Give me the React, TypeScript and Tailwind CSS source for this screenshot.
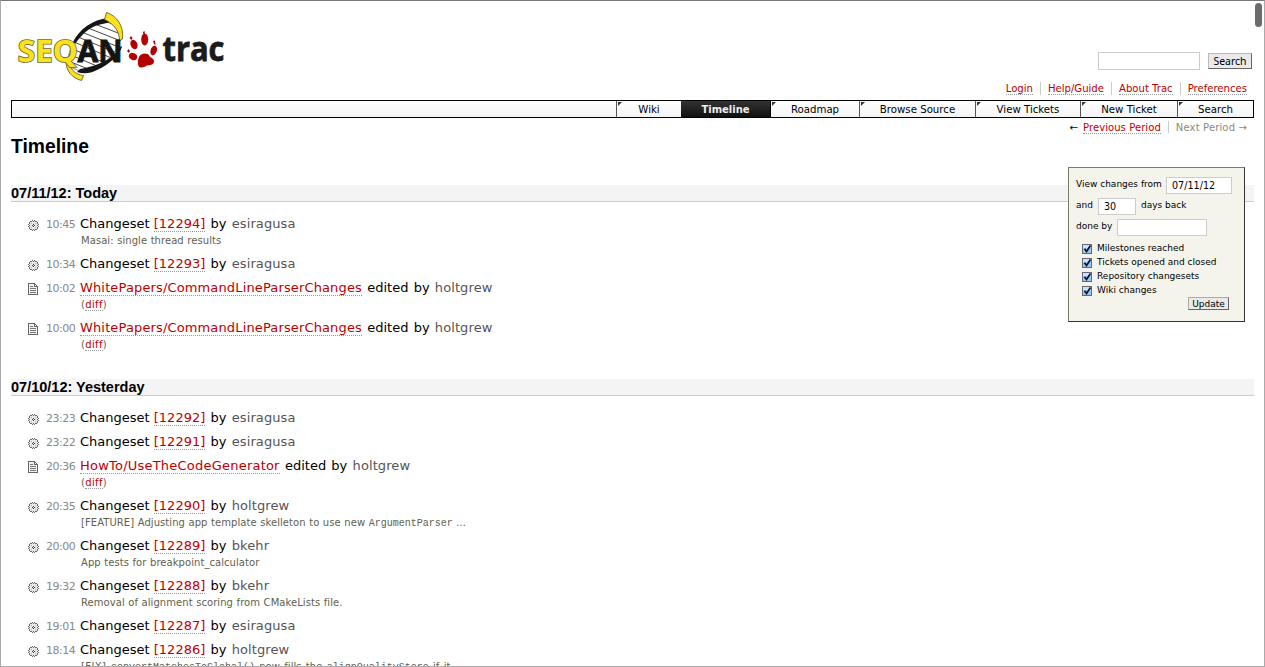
import React from "react";

const VERDANA = "font-['Verdana','DejaVu_Sans',sans-serif]";

function Logo() {
  return (
    <svg width="226" height="76" viewBox="12 8 226 76" className="block overflow-visible" role="img" aria-label="SeqAn trac">
      <defs>
        <clipPath id="helix">
          <path d="M106 22C92 24 80 33 74 43C69 51 66 60 70 67L80 71C96 70 112 60 118 46C121 39 121 31 116 25Z" />
        </clipPath>
      </defs>
      <path d="M106 22C92 24 80 33 74 43C69 51 66 60 70 67L80 71C96 70 112 60 118 46C121 39 121 31 116 25Z" fill="#fff" stroke="#555" strokeWidth=".7" />
      <g clipPath="url(#helix)" stroke="#333" strokeWidth=".9">
        <path d="M92 23L126 36M88 28L126 43M84 33L126 50M78 37L124 56M74 42L116 60M68 47L110 65M66 53L104 69M66 60L98 73" />
      </g>
      <path d="M108 18C93 19.500 79 29 72.500 43L75.500 43.500C82 34 90 27 98 25L109 22.500Z" fill="#161616" />
      <path d="M121 46C114 57 103 65 80 69L77 72C84 74.500 90 73.500 98 69.500C108 65 118 57 122 47Z" fill="#161616" />
      <path d="M106.500 12.500C117 16 124 26 122.500 39L119.500 41C119.500 31 114 24 104.500 19.500Z" fill="#fbe21c" stroke="#55501a" strokeWidth=".8" />
      <path d="M69 61C69.500 69 75 74.500 83.500 75.500L81.500 80.500C72 78 66 71 66 61Z" fill="#fbe21c" stroke="#55501a" strokeWidth=".8" />
      <text x="17.800" y="61.500" textLength="60" lengthAdjust="spacingAndGlyphs" fill="#fbe21c" stroke="#6e682c" strokeWidth="1.600" paintOrder="stroke" className="font-['Noto_Sans',sans-serif] text-[30.500px] font-bold">SEQ</text>
      <text x="77.500" y="61.500" textLength="45" lengthAdjust="spacingAndGlyphs" fill="#141414" stroke="#141414" strokeWidth=".9" className="font-['Noto_Sans',sans-serif] text-[30.500px] font-bold">AN</text>
      <g fill="#b50000">
        <ellipse cx="144.700" cy="39.500" rx="3.500" ry="6" />
        <ellipse cx="134" cy="44.500" rx="3.400" ry="4.900" transform="rotate(-22 134 44.500)" />
        <ellipse cx="153.700" cy="50.500" rx="3.100" ry="5" transform="rotate(18 153.700 50.500)" />
        <ellipse cx="133" cy="56.500" rx="4.300" ry="3.400" transform="rotate(30 133 56.500)" />
        <path d="M139.500 56C141.500 53 147.500 52.500 149.500 56C150.500 58 154 58 154 61.500C154 65 149.500 65 147 65.500C144 67.500 140 68.500 138.500 66C137 63 138 59 139.500 56Z" />
        <path d="M143 32L144.500 31L145 35L143.500 35ZM129.500 38L131 36L132.500 38L131.500 40ZM153 41L155 40.500L155.500 45L154 44ZM127 51L128.500 49L130 51L129 53Z" />
      </g>
      <text x="162.500" y="60.800" textLength="62" lengthAdjust="spacingAndGlyphs" fill="#1b1b1b" stroke="#1b1b1b" strokeWidth=".8" className="font-['Open_Sans',sans-serif] text-[34px] font-bold">trac</text>
    </svg>
  );
}

function GearIcon() {
  return (
    <svg width="11" height="11" viewBox="0 0 11 11" shapeRendering="crispEdges" className="block">
      <path d="M4 1h3v1h2v2h1v3h-1v2h-2v1h-3v-1h-2v-2h-1v-3h1v-2h2z" fill="#e8e8e8" />
      <path d="M4 0h1v1h-1zM6 0h1v1h-1zM5 1h1v1h-1zM2 1h2v1h-2zM7 1h2v1h-2zM1 2h1v2h-1zM9 2h1v2h-1zM0 4h1v1h-1zM10 4h1v1h-1zM1 5h1v1h-1zM9 5h1v1h-1zM0 6h1v1h-1zM10 6h1v1h-1zM1 7h1v2h-1zM9 7h1v2h-1zM2 9h2v1h-2zM7 9h2v1h-2zM5 9h1v1h-1zM4 10h1v1h-1zM6 10h1v1h-1z" fill="#666" />
      <path d="M5 4h1v1h-1zM4 5h1v1h-1zM6 5h1v1h-1zM5 6h1v1h-1z" fill="#444" />
      <path d="M3 3h1v1h-1zM7 3h1v1h-1zM3 7h1v1h-1zM7 7h1v1h-1z" fill="#bbb" />
    </svg>
  );
}

function PageIcon() {
  return (
    <svg width="10" height="12" viewBox="0 0 10 12" shapeRendering="crispEdges" className="-mt-px block">
      <path d="M0 0h7v1h1v1h1v1h1v9h-10z" fill="#666" />
      <path d="M1 1h5v3h3v7h-8z" fill="#f2f2f2" />
      <path d="M7 2h1v1h-1z" fill="#fff" />
      <path d="M2 3h3v1h-3zM2 5h6v1h-6zM2 7h6v1h-6zM2 9h6v1h-6z" fill="#777" />
    </svg>
  );
}

type Entry = { kind: "set" | "wiki"; time: string; link: string; author: string; note?: React.ReactNode };

const Mono = ({ children }: { children: React.ReactNode }) => (
  <span className="font-['Liberation_Mono',monospace] text-[10px] tracking-normal">{children}</span>
);

const diff = (
  <span className="tracking-[0.35px]">
    (<a className="border-b border-dotted border-[#999] text-[#b00]">diff</a>)
  </span>
);

const today: Entry[] = [
  { kind: "set", time: "10:45", link: "[12294]", author: "esiragusa", note: "Masai: single thread results" },
  { kind: "set", time: "10:34", link: "[12293]", author: "esiragusa" },
  { kind: "wiki", time: "10:02", link: "WhitePapers/CommandLineParserChanges", author: "holtgrew", note: diff },
  { kind: "wiki", time: "10:00", link: "WhitePapers/CommandLineParserChanges", author: "holtgrew", note: diff },
];

const yesterday: Entry[] = [
  { kind: "set", time: "23:23", link: "[12292]", author: "esiragusa" },
  { kind: "set", time: "23:22", link: "[12291]", author: "esiragusa" },
  { kind: "wiki", time: "20:36", link: "HowTo/UseTheCodeGenerator", author: "holtgrew", note: diff },
  { kind: "set", time: "20:35", link: "[12290]", author: "holtgrew", note: <>[FEATURE] Adjusting app template skelleton to use new <Mono>ArgumentParser</Mono> ...</> },
  { kind: "set", time: "20:00", link: "[12289]", author: "bkehr", note: "App tests for breakpoint_calculator" },
  { kind: "set", time: "19:32", link: "[12288]", author: "bkehr", note: "Removal of alignment scoring from CMakeLists file." },
  { kind: "set", time: "19:01", link: "[12287]", author: "esiragusa" },
  {
    kind: "set",
    time: "18:14",
    link: "[12286]",
    author: "holtgrew",
    note: (
      <span className="[word-spacing:1px]">
        <span className="tracking-[0.4px]">[FIX] </span>
        <Mono>convertMatchesToGlobal()</Mono> now fills the <Mono>alignQualityStore</Mono> if it
      </span>
    ),
  },
];

function Day({ title, entries, className }: { title: string; entries: Entry[]; className: string }) {
  return (
    <section className={`shrink-0 ${className}`}>
      <h2 className="h-[17px] border-b border-[#ccc] bg-[#f4f4f4] font-['Liberation_Sans',sans-serif] text-[14.5px] leading-4 font-bold">{title}</h2>
      <div className="pt-[10px]">
        {entries.map((e) => (
          <div key={e.time}>
            <div className="flex h-6 pl-[17px] leading-6 whitespace-pre">
              <span className="w-[18px] pt-[8px]">{e.kind === "set" ? <GearIcon /> : <PageIcon />}</span>
              <span className="w-[34px] pt-px text-[11px] tracking-[-0.5px] text-[#888]">{e.time}</span>
              <span className="text-[13px] [word-spacing:1.1px]">
                {e.kind === "set" && <span className="[word-spacing:0px]">{"Changeset "}</span>}
                <a className={`border-b border-dotted border-[#999] text-[#b00] ${e.kind === "wiki" ? (e.link.startsWith("How") ? "tracking-[0.22px]" : "tracking-[0.14px]") : ""}`}>{e.link}</a>
                {e.kind === "set" ? " by " : " edited by "}
                <span className="tracking-[0.1px] text-[#555]">{e.author}</span>
              </span>
            </div>
            {e.note && (
              <div className="h-4 pl-[70px] text-[10px] leading-[10px] tracking-[0.06px] whitespace-nowrap text-[#5f5f4c] [word-spacing:0.3px]">{e.note}</div>
            )}
          </div>
        ))}
      </div>
    </section>
  );
}

const tabs = [
  { label: "Wiki", w: "w-[65px]" },
  { label: "Timeline", w: "w-[90px]" },
  { label: "Roadmap", w: "w-[88px]" },
  { label: "Browse Source", w: "w-[116px]" },
  { label: "View Tickets", w: "w-[105px]" },
  { label: "New Ticket", w: "w-[97px]" },
  { label: "Search", w: "w-[76px]" },
];

function Nav() {
  return (
    <nav className="flex h-[18px] shrink-0 justify-end border border-black bg-linear-to-b from-white to-[#f4f4f4] text-[10.2px] leading-[17px]">
      {tabs.map((t) =>
        t.label === "Timeline" ? (
          <span key={t.label} className={`${t.w} border-r border-black bg-linear-to-b from-[#333] to-[#111] text-center text-[10px] font-bold text-[#eee]`}>{t.label}</span>
        ) : (
          <span key={t.label} className={`${t.w} relative text-center ${t.label === "Roadmap" ? "" : "border-l border-[#555]"}`}>
            <svg width="4" height="4" className="absolute top-px left-px"><path d="M0 0H4L0 4Z" fill="#333" /></svg>
            {t.label}
          </span>
        ),
      )}
    </nav>
  );
}

function Check({ children }: { children: string }) {
  return (
    <label className="flex h-[14px] items-center gap-[5px] leading-[14px]">
      <svg width="10" height="10" viewBox="0 0 10 10" className="mt-px block">
        <rect x=".5" y=".5" width="9" height="9" fill="#9cc8f2" stroke="#667" />
        <path d="M1 1h8v3H1z" fill="#cfe3f8" />
        <path d="M2.500 4.800L4.500 7.500L8.500 1.500" fill="none" stroke="#07142e" strokeWidth="1.700" />
      </svg>
      {children}
    </label>
  );
}

function Prefs() {
  return (
    <form className="absolute top-[166px] right-[19px] flex h-[155px] w-[177px] flex-col border border-t-[#7c7c66] border-r-[#333] border-b-[#333] border-l-[#7c7c66] bg-[#f4f4ec] pt-[9px] pl-[7px] text-[9px] leading-4 whitespace-nowrap">
      <div className="flex h-[21px] gap-[5px]">
        <span className="-mt-px w-[85px]">View changes from</span>
        <span className="h-[17px] w-[66px] border border-[#ccc] bg-white pl-[5px] text-[9.6px] leading-[16px]">07/11/12</span>
      </div>
      <div className="flex h-[21px]">
        <span className="-mt-px w-[22px]">and</span>
        <span className="h-[17px] w-[38px] border border-[#ccc] bg-white pl-[5px] text-[9.6px] leading-[16px]">30</span>
        <span className="-mt-px ml-[5px]">days back</span>
      </div>
      <div className="flex h-[22px]">
        <span className="-mt-px w-[41px]">done by</span>
        <span className="h-[17px] w-[90px] border border-[#ccc] bg-white" />
      </div>
      <div className="pl-[6px]">
        <Check>Milestones reached</Check>
        <Check>Tickets opened and closed</Check>
        <Check>Repository changesets</Check>
        <Check>Wiki changes</Check>
      </div>
      <span className="mr-[15px] h-[13px] w-[41px] self-end border border-[#aaa] border-r-[#666] border-b-[#666] bg-[#eaeaea] text-center leading-[12px]">Update</span>
    </form>
  );
}

const metaLink = "border-b border-dotted border-[#999] text-[#b00]";

export default function App() {
  return (
    <div className={`${VERDANA} relative flex h-[667px] w-[1265px] flex-col overflow-hidden border border-t-[#777] border-r-[#aaa] border-b-[#aaa] border-l-[#aaa] bg-white pr-[10px] pl-[10px] text-black`}>
      <header className="flex h-[79px] shrink-0 justify-between pt-[7px]">
        <div className="pl-px"><Logo /></div>
        <div className="flex pt-[44px] pr-[2px]">
          <span className="h-[18px] w-[102px] border border-[#ccc]" />
          <span className="mt-px ml-2 h-[16px] w-[44px] border border-[#bbb] border-r-[#666] border-b-[#666] bg-[#eaeaea] text-center font-['Noto_Sans',sans-serif] text-[10.5px] leading-[14px]">Search</span>
        </div>
      </header>
      <div className="flex h-[20px] shrink-0 justify-end pt-[2px] pr-[7px] text-[10.1px]">
        {["Login", "Help/Guide", "About Trac", "Preferences"].map((m, i) => (
          <span key={m} className={`h-[13px] leading-[14px] ${i ? "ml-[7px] border-l border-[#ccc] pl-[7px]" : ""}`}>
            <a className={metaLink}>{m}</a>
          </span>
        ))}
      </div>
      <Nav />
      <div className="flex h-[19px] shrink-0 justify-end pt-[3px] pr-[7px] text-[10px] leading-[13px] tracking-[0.08px]">
        <span>←<a className={`ml-[5px] ${metaLink}`}>Previous Period</a></span>
        <span className="ml-[7px] h-3 border-l border-[#ccc] pl-[7px] tracking-[0.15px] text-[#8a8a78]">Next Period →</span>
      </div>
      <h1 className="h-[48px] shrink-0 font-['Liberation_Sans',sans-serif] text-[19.3px] leading-[20px] font-bold">Timeline</h1>
      <Day title="07/11/12: Today" entries={today} className="" />
      <Day title="07/10/12: Yesterday" entries={yesterday} className="pt-[23px]" />
      <Prefs />
      <div className="absolute top-[2px] right-[2px] h-6 w-[7px] rounded-full bg-[#6b6b6b]" />
    </div>
  );
}
